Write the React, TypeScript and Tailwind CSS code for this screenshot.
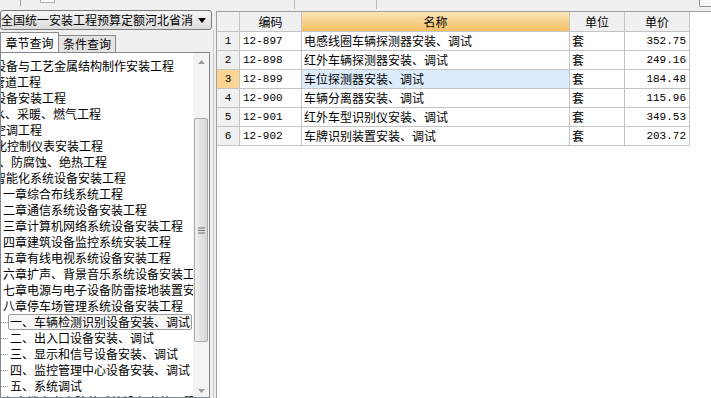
import React from "react";

type TreeLine = { text: string; ml: number; kind: "top" | "chapter" | "leaf" | "selected" };

const tree: TreeLine[] = [
  { text: "设备与工艺金属结构制作安装工程", ml: -7, kind: "top" },
  { text: "管道工程", ml: -8, kind: "top" },
  { text: "设备安装工程", ml: -7, kind: "top" },
  { text: "水、采暖、燃气工程", ml: -8, kind: "top" },
  { text: "空调工程", ml: -7, kind: "top" },
  { text: "化控制仪表安装工程", ml: -6, kind: "top" },
  { text: "、防腐蚀、绝热工程", ml: -2, kind: "top" },
  { text: "智能化系统设备安装工程", ml: -7, kind: "top" },
  { text: "一章综合布线系统工程", ml: 2, kind: "chapter" },
  { text: "二章通信系统设备安装工程", ml: 2, kind: "chapter" },
  { text: "三章计算机网络系统设备安装工程", ml: 2, kind: "chapter" },
  { text: "四章建筑设备监控系统安装工程", ml: 2, kind: "chapter" },
  { text: "五章有线电视系统设备安装工程", ml: 2, kind: "chapter" },
  { text: "六章扩声、背景音乐系统设备安装工程", ml: 2, kind: "chapter" },
  { text: "七章电源与电子设备防雷接地装置安装工程", ml: 2, kind: "chapter" },
  { text: "八章停车场管理系统设备安装工程", ml: 2, kind: "chapter" },
  { text: "一、车辆检测识别设备安装、调试", ml: 0, kind: "selected" },
  { text: "二、出入口设备安装、调试", ml: 0, kind: "leaf" },
  { text: "三、显示和信号设备安装、调试", ml: 0, kind: "leaf" },
  { text: "四、监控管理中心设备安装、调试", ml: 0, kind: "leaf" },
  { text: "五、系统调试", ml: 0, kind: "leaf" },
  { text: "九章楼宇安全防范系统设备安装工程", ml: 2, kind: "chapter" },
];

const rows = [
  { n: 1, code: "12-897", name: "电感线圈车辆探测器安装、调试", unit: "套", price: "352.75" },
  { n: 2, code: "12-898", name: "红外车辆探测器安装、调试", unit: "套", price: "249.16" },
  { n: 3, code: "12-899", name: "车位探测器安装、调试", unit: "套", price: "184.48" },
  { n: 4, code: "12-900", name: "车辆分离器安装、调试", unit: "套", price: "115.96" },
  { n: 5, code: "12-901", name: "红外车型识别仪安装、调试", unit: "套", price: "349.53" },
  { n: 6, code: "12-902", name: "车牌识别装置安装、调试", unit: "套", price: "203.72" },
];

const cell = "border-r border-b border-[#c4c4c4] h-[19px] flex items-center overflow-hidden whitespace-nowrap";

export default function App() {
  return (
    <div className="w-[711px] h-[398px] bg-[#f0f0f0] flex flex-col overflow-hidden text-[12px] text-black font-['Noto_Sans_CJK_SC',sans-serif] leading-none">
      {/* toolbar remnants */}
      <div className="h-[10px] flex shrink-0">
        <div className="w-[21px] h-[6px] border-r border-[#a0a0a0]" />
        <div className="w-[19px]" />
        <div className="w-[15px] h-[3px] border border-t-0 border-[#b0b0b0] bg-[#fafafa]" />
        <div className="w-[169px]" />
        <div className="w-[71px] h-[9px] border-r border-[#b8b8b8]" />
        <div className="w-[82px] h-[9px] border-r border-[#b8b8b8]" />
        <div className="w-[322px]" />
        <div className="w-[12px] h-[7px] border border-t-0 border-r-0 border-[#909090] rounded-bl-[2px] bg-[#f8f8f8]" />
      </div>

      <div className="flex flex-1 min-h-0">
        {/* left column */}
        <div className="w-[213px] flex flex-col shrink-0">
          <div className="h-[20px] w-[212px] rounded-[3px] border border-[#7a7a7a] bg-gradient-to-b from-[#f6f6f6] to-[#dcdcdc] flex items-center overflow-hidden">
            <span className="whitespace-nowrap w-[192px] overflow-hidden">全国统一安装工程预算定额河北省消</span>
            <span className="flex-1 flex justify-center">
              <svg width="8" height="5" viewBox="0 0 8 5">
                <path d="M0 0 H8 L4 5 Z" fill="#000" />
              </svg>
            </span>
          </div>

          <div className="mt-[2px] h-[20px] flex items-end shrink-0">
            <div className="w-[59px] h-[20px] border border-b-0 border-[#8a8a8a] bg-[#fbfbfb] flex items-center justify-center">
              章节查询
            </div>
            <div className="w-[57px] h-[17px] border border-l-0 border-b-0 border-[#8a8a8a] bg-[#e4e4e4] flex items-center justify-center">
              条件查询
            </div>
          </div>

          <div className="flex-1 min-h-0 w-[210px] border border-[#828790] bg-white flex">
            <div className="flex-1 overflow-hidden pt-[5px]">
              {tree.map((t, i) => (
                <div key={i} className="h-[16px] flex items-center whitespace-nowrap">
                  {t.kind === "leaf" || t.kind === "selected" ? (
                    <>
                      <span className="w-[7px] border-t border-dotted border-[#9a9a9a] shrink-0" />
                      <span
                        className={
                          t.kind === "selected"
                            ? "h-[16px] flex items-center px-[1px] border border-[#9c9c9c] rounded-[2px] bg-[#f7f7f7]"
                            : "px-[2px]"
                        }
                      >
                        {t.text}
                      </span>
                    </>
                  ) : (
                    <span style={{ marginLeft: t.ml }}>{t.text}</span>
                  )}
                </div>
              ))}
            </div>

            {/* vertical scrollbar */}
            <div className="w-[16px] bg-[#f3f3f3] flex flex-col items-center shrink-0">
              <div className="h-[17px] flex items-center justify-center">
                <svg width="7" height="4" viewBox="0 0 7 4">
                  <path d="M0 4 L3.5 0 L7 4 Z" fill="#9a9a9a" />
                </svg>
              </div>
              <div className="h-[48px]" />
              <div className="w-[14px] h-[224px] rounded-[2px] border border-[#a8a8a8] bg-gradient-to-r from-[#f0f0f0] via-[#e2e2e2] to-[#d8d8d8] flex items-center justify-center">
                <svg width="7" height="7" viewBox="0 0 7 7">
                  <path d="M0 1 H7 M0 3.5 H7 M0 6 H7" stroke="#707070" strokeWidth="1" />
                </svg>
              </div>
              <div className="flex-1" />
              <div className="h-[12px] flex items-center justify-center">
                <svg width="7" height="4" viewBox="0 0 7 4">
                  <path d="M0 0 L3.5 4 L7 0 Z" fill="#9a9a9a" />
                </svg>
              </div>
            </div>
          </div>
        </div>

        {/* splitter */}
        <div className="w-[3px] flex shrink-0">
          <div className="w-[1px] border-l border-[#c8c8c8] mt-[20px]" />
        </div>

        {/* grid */}
        <div className="flex-1 bg-white border-l border-t border-[#a0a0a0] mt-[1px]">
          <div className="grid grid-cols-[23px_62px_268px_55px_65px] w-fit">
            <div className={`${cell} h-[20px] bg-[#f0f0f0]`} />
            <div className={`${cell} h-[20px] bg-[#f0f0f0] justify-center`}>编码</div>
            <div className={`${cell} h-[20px] bg-gradient-to-b from-[#fbe4b6] to-[#f5c061] justify-center`}>名称</div>
            <div className={`${cell} h-[20px] bg-[#f0f0f0] justify-center`}>单位</div>
            <div className={`${cell} h-[20px] bg-[#f0f0f0] justify-center`}>单价</div>

            {rows.map((r) => {
              const sel = r.n === 3;
              return (
                <React.Fragment key={r.n}>
                  <div className={`${cell} justify-center font-['Liberation_Mono',monospace] text-[11px] ${sel ? "bg-[#fcd595]" : "bg-[#f0f0f0]"}`}>
                    {r.n}
                  </div>
                  <div className={`${cell} pl-[3px] font-['Liberation_Mono',monospace] text-[11px]`}>{r.code}</div>
                  <div className={`${cell} pl-[2px] ${sel ? "bg-[#dcecfc]" : ""}`}>{r.name}</div>
                  <div className={`${cell} pl-[2px]`}>{r.unit}</div>
                  <div className={`${cell} justify-end pr-[3px] font-['Liberation_Mono',monospace] text-[11px]`}>{r.price}</div>
                </React.Fragment>
              );
            })}
          </div>
        </div>
      </div>
    </div>
  );
}
